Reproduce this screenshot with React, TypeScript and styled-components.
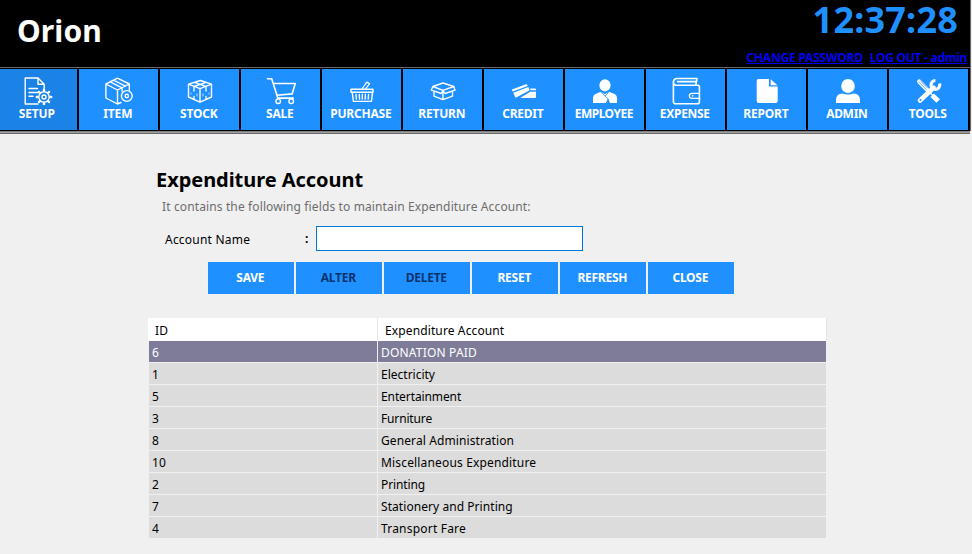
import React from "react";
import styled, { createGlobalStyle, css } from "styled-components";

const GlobalStyle = createGlobalStyle`
  * { box-sizing: border-box; }
  body {
    margin: 0;
    background: #f0f0f0;
    font-family: "Noto Sans", "Open Sans", sans-serif;
    font-size: 12px;
  }
`;

const Window = styled.div`
  width: 972px;
  height: 554px;
  background: #f0f0f0;
`;

const Header = styled.header`
  display: flex;
  justify-content: space-between;
  width: 971px;
  height: 67px;
  background: #000;
  border-right: 1px solid #696969;
`;

const Brand = styled.h1`
  margin: 0;
  padding-left: 17px;
  font-size: 30px;
  font-weight: 700;
  line-height: 61px;
  letter-spacing: 0.1px;
  color: #fff;
`;

const Session = styled.div`
  display: flex;
  flex-direction: column;
  align-items: flex-end;
  padding-right: 3px;
`;

const Clock = styled.time`
  height: 49px;
  padding-right: 9px;
  font-size: 36px;
  font-weight: 700;
  line-height: 39px;
  letter-spacing: 0.2px;
  color: #1e90ff;
`;

const SessionLinks = styled.nav`
  display: flex;
  gap: 7px;
`;

const SessionLink = styled.a<{ $tracking: number }>`
  height: 15px;
  font-weight: 700;
  line-height: 17px;
  letter-spacing: ${(p) => p.$tracking}px;
  color: #0000f0;
  text-decoration: underline;
  text-underline-offset: 1px;
  white-space: nowrap;
`;

const Toolbar = styled.nav`
  display: flex;
  gap: 2px;
  width: 971px;
  height: 64px;
  padding-top: 1px;
  padding-bottom: 1px;
  background: #000;
  border-top: 1px solid #696969;
  border-right: 1px solid #696969;
`;

const Etch = styled.div`
  width: 970px;
  height: 3px;
  background: #a0a0a0;
  border-top: 1px solid #808080;
  border-bottom: 1px solid #696969;
`;

const Tile = styled.button<{ $active?: boolean }>`
  display: flex;
  flex: none;
  flex-direction: column;
  align-items: center;
  width: 79px;
  height: 61px;
  padding: 0;
  border: 0;
  background: #1e90ff;
  color: #fff;
  ${(p) =>
    p.$active &&
    css`
      background: #1b82e6;
      margin-left: -2px;
    `}
`;

const TileIcon = styled.svg`
  display: block;
  flex: none;
  width: 79px;
  height: 36px;
  fill: none;
  stroke: #fff;
  stroke-width: 1.4;
  stroke-linejoin: round;
  stroke-linecap: round;
`;

const TileLabel = styled.span<{ $tracking: number }>`
  padding-right: 1.4px;
  font: 700 12px/17px "Noto Sans", sans-serif;
  letter-spacing: ${(p) => p.$tracking}px;
  white-space: nowrap;
`;

const Content = styled.main`
  padding: 33px 0 0 148px;
`;

const Title = styled.h2`
  margin: 0 0 0 8px;
  font-size: 20px;
  font-weight: 700;
  line-height: 25px;
  letter-spacing: -0.05px;
  color: #000;
`;

const Hint = styled.p`
  margin: 5px 0 0 14px;
  line-height: 20px;
  letter-spacing: 0.125px;
  color: #6d6d6d;
`;

const Field = styled.label`
  display: flex;
  align-items: center;
  height: 25px;
  margin: 9px 0 0 17px;
  color: #000;
`;

const FieldName = styled.span`
  width: 139px;
  letter-spacing: 0.22px;
  line-height: 25px;
  padding-top: 1px;
`;

const Colon = styled.span`
  width: 12px;
  padding-left: 1px;
  font-weight: 700;
`;

const TextInput = styled.input`
  width: 267px;
  height: 25px;
  padding: 2px 4px;
  border: 1px solid #0078d7;
  border-radius: 0;
  background: #fff;
  outline: none;
`;

const Actions = styled.div`
  display: flex;
  gap: 2px;
  margin: 11px 0 0 60px;
`;

const ActionButton = styled.button<{ $muted?: boolean }>`
  width: 86px;
  height: 32px;
  padding: 0 1.4px 0 0;
  border: 0;
  background: #1e90ff;
  font: 700 12px/32px "Noto Sans", sans-serif;
  letter-spacing: -0.25px;
  color: ${(p) => (p.$muted ? "#0a3470" : "#fff")};
`;

const Grid = styled.div`
  width: 679px;
  margin-top: 24px;
`;

const HeadRow = styled.div`
  display: grid;
  grid-template-columns: 229px 448px;
  gap: 1px;
  height: 23px;
  background: #e5e5e5;
`;

const HeadCell = styled.div`
  padding-left: 7px;
  background: #fff;
  line-height: 25px;
  height: 23px;
  letter-spacing: 0.12px;
  color: #000;
`;

const Row = styled.div<{ $selected?: boolean }>`
  display: grid;
  grid-template-columns: 228px 448px;
  gap: 1px;
  height: 22px;
  margin-left: 1px;
  border-bottom: 1px solid #f0f0f0;
  color: ${(p) => (p.$selected ? "#fff" : "#000")};

  > * {
    background: ${(p) => (p.$selected ? "#7e7c99" : "#dcdcdc")};
  }
`;

const Cell = styled.div<{ $tracking?: number }>`
  height: 21px;
  padding-left: 3px;
  line-height: 24px;
  letter-spacing: ${(p) => p.$tracking ?? 0.14}px;
  white-space: nowrap;
`;

const GEAR_TEETH = [0, 45, 90, 135, 180, 225, 270, 315];

const icons: Record<string, React.ReactNode> = {
  SETUP: (
    <>
      <path d="M40 35H27.2V9H40l6.2 6.2V20M40 9v6.2h6.2M31 19.5h8.5M31 23.5h10M31 27.3h4" />
      <circle cx="46" cy="28" r="5.2" />
      <circle cx="46" cy="28" r="2" />
      {GEAR_TEETH.map((a) => (
        <path key={a} d="M46 22v-1.2" strokeWidth="2.4" transform={`rotate(${a} 46 28)`} />
      ))}
    </>
  ),
  ITEM: (
    <>
      <path d="M42 33.5l-3.5 1.5-11.6-6V15L38.5 9.2 50.3 15v6.5M26.9 15l11.6 6 11.8-6M38.5 21v14M31.2 12.8l11.9 6v3.4M34.6 11.2l11.8 6" />
      <circle cx="47.8" cy="27" r="5.4" />
      <circle cx="47.8" cy="27" r="1.7" />
    </>
  ),
  STOCK: (
    <>
      <path d="M28.5 15.2l12-3.7 11 3.7V28L40 33.2 28.5 28zM28.5 15.2L40 19.6l11.5-4.4M40 19.6v13.6M34.5 13.4L46 17.3M46 13.3l-12 4.2" />
      <path d="M34 18v4M46 18v4M34 27.5v3M46 27.5v3" strokeWidth="1.3" />
      <path d="M37 25v2M43 25v2M31 24v1M49 24v1" strokeWidth=".7" />
    </>
  ),
  SALE: (
    <>
      <path d="M26.5 9.7h4.2l6.1 19.4h15.4M32.5 14.5h21.8l-3.2 10.4-15.2 1.4" strokeWidth="1.6" />
      <circle cx="37.2" cy="32.2" r="2.3" />
      <circle cx="50.2" cy="32.2" r="2.3" />
    </>
  ),
  PURCHASE: (
    <>
      <path d="M29 20.2h22M29 20.2v3h22v-3M30.2 23.2l1.2 9.2h18l1.2-9.2M34 25.5l.4 4.5M37.3 25.5l.2 4.5M40.3 25.5V30M43.4 25.5l-.2 4.5M46.6 25.5l-.4 4.5" />
      <path d="M40 20l4.8-6.9 2.8 1.5-4.2 5.6" strokeWidth="1.2" />
    </>
  ),
  RETURN: (
    <>
      <path d="M29.8 17.5L40 14l10.8 3.5L40 21.3zM29.8 17.5l-1.5 3.7 10 3.3 1.7-3.2 2 3.2 10-3.3-1.2-3.7M31 22.7v4.5l9 3.5 9.5-3.5v-4.5M40 22v8.5" strokeWidth="1.35" />
    </>
  ),
  CREDIT: (
    <g fill="#fff" stroke="none">
      <path d="M28 20.4l13.8-5.1q1-.4 1.5.6l.4 1-14.9 5.6-.9-1.2q-.3-.6.1-.9z" />
      <path d="M29.3 23.8l15-5.7 1.4 3.1-13 7.1q-1 .5-1.6-.4z" />
      <path d="M46 19.5h5q1 0 1 1v.8h-5.3zM46.2 22.7H52v5.2q0 1-1 1H36.2z" />
    </g>
  ),
  EMPLOYEE: (
    <g fill="#fff" stroke="none">
      <ellipse cx="40" cy="16.3" rx="5.6" ry="6.1" />
      <path d="M28 34v-4.8q0-3.2 3-4.4l5-2 4 2.5 4-2.5 5 2q3 1.2 3 4.4V34h-7l-2-5-2 5z" />
      <path d="M36 22.9l4 4.2 4-4.2M40 27l3 3" fill="none" stroke="#1e90ff" strokeWidth=".8" />
    </g>
  ),
  EXPENSE: (
    <g strokeWidth="1.6">
      <path d="M27.4 12.5v20q0 2.3 2.5 2.3h21.5q2 0 2-2V18q0-1.7-1.7-1.7H30q-2.6-.4-2.6-3.3t3-3.5H51l-1.2 6.6M31.5 12.6h18" />
      <path d="M53.3 24.3H46q-2.7 0-2.7 2.5t2.7 2.5h7.3" strokeWidth="1.2" />
      <circle cx="46.5" cy="26.8" r=".6" strokeWidth=".6" />
    </g>
  ),
  REPORT: (
    <g fill="#fff" stroke="none">
      <path d="M31.5 10H42v7.6h8.7V32q0 2-2 2h-17q-2 0-2-2V12q0-2 1.8-2z" />
      <path d="M43.7 10.2l6.7 6h-6.7z" />
    </g>
  ),
  ADMIN: (
    <g fill="#fff" stroke="none">
      <ellipse cx="40" cy="17" rx="6.8" ry="7" />
      <path d="M28 34v-3.2q0-6.2 6.5-6.4 5.5 2.2 11 0 6.5.2 6.5 6.4V34z" />
    </g>
  ),
  TOOLS: (
    <>
      <path d="M30.2 12.5L38 20.5" strokeWidth="4.4" />
      <path d="M29.6 12.7l8 8.3M31.5 11.8l7 7.2" stroke="#1e90ff" strokeWidth=".7" />
      <path d="M38 21l5 4.8" strokeWidth="1.5" />
      <path d="M43.2 26.2l6 5.8" strokeWidth="5" strokeLinecap="butt" />
      <path d="M44.5 18.8L31 31.5" strokeWidth="4.6" />
      <path d="M50.6 14.5a4.4 4.4 0 1 1-4.2-3" strokeWidth="3.2" strokeLinecap="butt" />
      <circle cx="31.5" cy="31" r="1" fill="#1e90ff" stroke="none" />
    </>
  ),
};

const menu: [string, number][] = [
  ["SETUP", -0.1],
  ["ITEM", -0.15],
  ["STOCK", -0.15],
  ["SALE", -0.2],
  ["PURCHASE", -0.2],
  ["RETURN", -0.2],
  ["CREDIT", -0.25],
  ["EMPLOYEE", -0.5],
  ["EXPENSE", -0.3],
  ["REPORT", -0.2],
  ["ADMIN", -0.3],
  ["TOOLS", -0.2],
];

const actions = [
  { label: "SAVE" },
  { label: "ALTER", muted: true },
  { label: "DELETE", muted: true },
  { label: "RESET" },
  { label: "REFRESH" },
  { label: "CLOSE" },
];

const accounts: [number, string, number][] = [
  [6, "DONATION PAID", 0.18],
  [1, "Electricity", 0],
  [5, "Entertainment", -0.1],
  [3, "Furniture", -0.15],
  [8, "General Administration", 0.1],
  [10, "Miscellaneous Expenditure", 0.16],
  [2, "Printing", -0.1],
  [7, "Stationery and Printing", 0.06],
  [4, "Transport Fare", 0.2],
];

export default function App() {
  return (
    <Window>
      <GlobalStyle />
      <Header>
        <Brand>Orion</Brand>
        <Session>
          <Clock>12:37:28</Clock>
          <SessionLinks>
            <SessionLink $tracking={-0.2}>CHANGE PASSWORD</SessionLink>
            <SessionLink $tracking={-0.27}>LOG OUT - admin</SessionLink>
          </SessionLinks>
        </Session>
      </Header>
      <Toolbar>
        {menu.map(([label, tracking], i) => (
          <Tile key={label} $active={i === 0}>
            <TileIcon viewBox="0 0 79 36">{icons[label]}</TileIcon>
            <TileLabel $tracking={tracking}>{label}</TileLabel>
          </Tile>
        ))}
      </Toolbar>
      <Etch />
      <Content>
        <Title>Expenditure Account</Title>
        <Hint>It contains the following fields to maintain Expenditure Account:</Hint>
        <Field>
          <FieldName>Account Name</FieldName>
          <Colon>:</Colon>
          <TextInput />
        </Field>
        <Actions>
          {actions.map((a) => (
            <ActionButton key={a.label} $muted={a.muted}>
              {a.label}
            </ActionButton>
          ))}
        </Actions>
        <Grid>
          <HeadRow>
            <HeadCell>ID</HeadCell>
            <HeadCell>Expenditure Account</HeadCell>
          </HeadRow>
          {accounts.map(([id, name, tracking], i) => (
            <Row key={id} $selected={i === 0}>
              <Cell>{id}</Cell>
              <Cell $tracking={tracking}>{name}</Cell>
            </Row>
          ))}
        </Grid>
      </Content>
    </Window>
  );
}
